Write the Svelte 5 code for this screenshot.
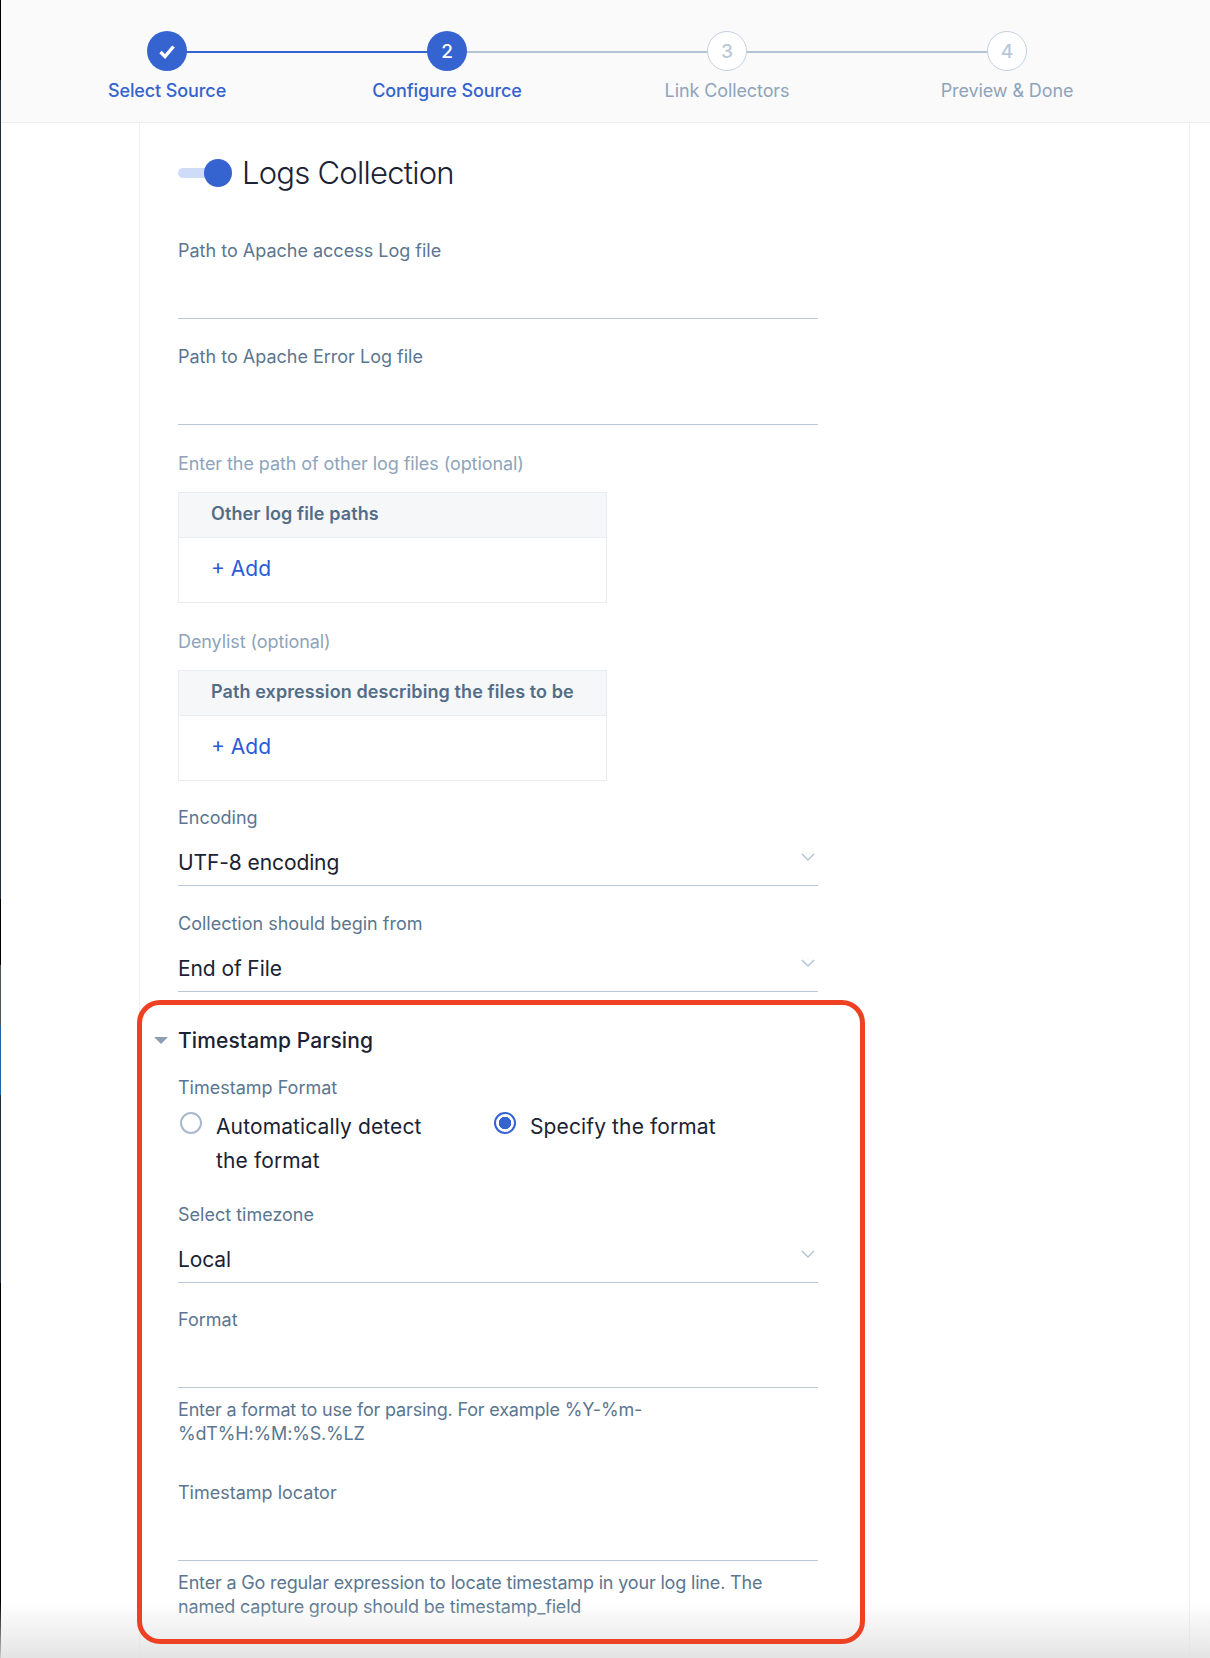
<script lang="ts">
	type Step = { label: string; mark: string; state: 'done' | 'current' | 'todo' };

	const steps: Step[] = [
		{ label: 'Select Source', mark: '', state: 'done' },
		{ label: 'Configure Source', mark: '2', state: 'current' },
		{ label: 'Link Collectors', mark: '3', state: 'todo' },
		{ label: 'Preview & Done', mark: '4', state: 'todo' }
	];
</script>

{#snippet chevron()}
	<svg class="chevron" width="14" height="8" viewBox="0 0 14 8" aria-hidden="true">
		<path d="M1 1l6 6 6-6" fill="none" stroke="#b3c2d3" stroke-width="1.4" />
	</svg>
{/snippet}

<div class="page">
	<header class="stepper">
		{#each steps as step, i}
			<div class="step {step.state}" class:last={i === steps.length - 1} class:lit={i === 0}>
				<span class="dot">
					{#if step.state === 'done'}
						<svg width="18" height="15" viewBox="0 0 18 15" aria-hidden="true">
							<path d="M2.5 8l4.5 4.5 8.5-10" fill="none" stroke="#fff" stroke-width="3.4" />
						</svg>
					{:else}
						{step.mark}
					{/if}
				</span>
				<span class="step-label">{step.label}</span>
			</div>
		{/each}
	</header>

	<main class="panel">
		<div class="form">
			<div class="logs-title">
				<span class="toggle"><span class="knob"></span></span>
				<h2>Logs Collection</h2>
			</div>

			<div class="field first">
				<span class="label">Path to Apache access Log file</span>
				<div class="input short"></div>
			</div>
			<div class="field second">
				<span class="label">Path to Apache Error Log file</span>
				<div class="input short"></div>
			</div>

			<div class="list-field">
				<span class="label muted">Enter the path of other log files (optional)</span>
				<div class="list-box">
					<div class="list-head">Other log file paths</div>
					<div class="list-body">+ Add</div>
				</div>
			</div>
			<div class="list-field">
				<span class="label muted">Denylist (optional)</span>
				<div class="list-box">
					<div class="list-head">Path expression describing the files to be</div>
					<div class="list-body">+ Add</div>
				</div>
			</div>

			<div class="field">
				<span class="label">Encoding</span>
				<div class="input select">UTF-8 encoding{@render chevron()}</div>
			</div>
			<div class="field second">
				<span class="label">Collection should begin from</span>
				<div class="input select">End of File{@render chevron()}</div>
			</div>

			<section class="parsing">
				<h3><span class="caret"></span>Timestamp Parsing</h3>
				<span class="label">Timestamp Format</span>
				<div class="radios">
					<div class="radio-item">
						<span class="radio"></span>
						<span>Automatically detect the format</span>
					</div>
					<div class="radio-item">
						<span class="radio on"></span>
						<span>Specify the format</span>
					</div>
				</div>

				<div class="field tz">
					<span class="label">Select timezone</span>
					<div class="input select">Local{@render chevron()}</div>
				</div>
				<div class="field">
					<span class="label">Format</span>
					<div class="input short"></div>
					<p class="help">Enter a format to use for parsing. For example %Y-%m-%dT%H:%M:%S.%LZ</p>
				</div>
				<div class="field locator">
					<span class="label">Timestamp locator</span>
					<div class="input short"></div>
					<p class="help">Enter a Go regular expression to locate timestamp in your log line. The named capture group should be timestamp_field</p>
				</div>
			</section>
		</div>
	</main>

	<!-- screenshot edges and the annotation sit on top of the page -->
	<div class="edge"></div>
	<div class="fade"></div>
	<div class="highlight"></div>
</div>

<style>
	:global(body) {
		margin: 0;
		background: #fff;
	}

	.page {
		position: relative;
		width: 1210px;
		height: 1658px;
		overflow: hidden;
		font-family: Inter, 'Liberation Sans', sans-serif;
		color: #1a2233;
	}

	/* ── Stepper ──────────────────────────────────────────── */
	.stepper {
		box-sizing: border-box;
		display: flex;
		height: 123px;
		padding: 31px 0 0 27px;
		background: #fafafa;
		border-bottom: 1px solid #eeeff1;
	}

	.step {
		position: relative;
		width: 280px;
		display: flex;
		flex-direction: column;
		align-items: center;
		gap: 8px;
	}

	.step::after {
		content: '';
		position: absolute;
		left: 50%;
		width: 280px;
		top: 20px;
		height: 2px;
		background: #b4c4d6;
	}

	.step.lit::after {
		background: #3563d0;
	}

	.step.last::after {
		display: none;
	}

	.dot {
		position: relative;
		z-index: 1;
		box-sizing: border-box;
		width: 40px;
		height: 40px;
		border-radius: 50%;
		display: flex;
		align-items: center;
		justify-content: center;
		font-size: 19px;
		font-weight: 500;
		background: #3563d0;
		color: #fff;
	}

	.todo .dot {
		background: #fff;
		border: 1px solid #c3d1e0;
		color: #b9c8d9;
	}

	.step-label {
		font-size: 18px;
		line-height: 24px;
		color: #3563d0;
		white-space: nowrap;
	}

	.done .step-label,
	.current .step-label {
		font-weight: 500;
		letter-spacing: -0.1px;
	}

	.todo .step-label {
		color: #8ea4bb;
		letter-spacing: -0.1px;
	}

	/* ── Panel ────────────────────────────────────────────── */
	.panel {
		box-sizing: border-box;
		margin-left: 139px;
		width: 1051px;
		height: 1535px;
		padding-left: 38px;
		border-left: 1px solid #eeeff1;
		border-right: 1px solid #eeeff1;
	}

	.form {
		width: 640px;
	}

	.logs-title {
		display: flex;
		align-items: center;
		gap: 10px;
		padding-top: 30px;
		height: 40px;
	}

	.logs-title h2 {
		margin: 0;
		font-size: 31px;
		line-height: 40px;
		font-weight: 300;
		letter-spacing: -0.75px;
		white-space: nowrap;
	}

	.toggle {
		position: relative;
		width: 54px;
		height: 10px;
		border-radius: 5px;
		background: #cfdcf8;
	}

	.knob {
		position: absolute;
		right: 0;
		top: -9px;
		width: 28px;
		height: 28px;
		border-radius: 50%;
		background: #3563d0;
	}

	/* ── Fields ───────────────────────────────────────────── */
	.label {
		display: block;
		font-size: 18px;
		line-height: 24px;
		color: #5b7690;
	}

	.label.muted {
		color: #8ea4bb;
		letter-spacing: -0.08px;
	}

	.field {
		margin-top: 25px;
	}

	.field.first {
		margin-top: 46px;
	}

	.field.second {
		margin-top: 26px;
	}

	.input {
		position: relative;
		box-sizing: border-box;
		height: 57px;
		border-bottom: 1px solid #b9c6d4;
	}

	.input.short {
		height: 56px;
	}

	.select {
		height: 56px;
		padding-top: 18px;
		font-size: 21px;
		line-height: 30px;
		letter-spacing: -0.1px;
	}

	.chevron {
		position: absolute;
		right: 3px;
		top: 23px;
	}

	.list-field {
		margin-top: 27px;
	}

	.list-box {
		box-sizing: border-box;
		width: 429px;
		height: 111px;
		margin-top: 16px;
		border: 1px solid #e9ecf0;
	}

	.list-head {
		box-sizing: border-box;
		height: 45px;
		padding: 7px 0 0 32px;
		font-size: 18px;
		line-height: 28px;
		font-weight: 600;
		letter-spacing: 0.1px;
		color: #536d87;
		background: #f5f7f9;
		border-bottom: 1px solid #e9ecf0;
		white-space: nowrap;
		overflow: hidden;
	}

	.list-body {
		padding: 16px 0 0 32px;
		font-size: 21px;
		line-height: 30px;
		color: #2b5bd7;
	}

	/* ── Timestamp parsing ────────────────────────────────── */
	.parsing {
		margin-top: 34px;
	}

	.parsing h3 {
		position: relative;
		margin: 0 0 20px;
		font-size: 21px;
		line-height: 30px;
		font-weight: 500;
		letter-spacing: 0.1px;
	}

	.caret {
		position: absolute;
		left: -24px;
		top: 11px;
		border-left: 7px solid transparent;
		border-right: 7px solid transparent;
		border-top: 7px solid #8d9db4;
	}

	.radios {
		display: flex;
		margin-top: 10px;
		font-size: 21px;
		line-height: 34px;
		letter-spacing: 0.12px;
	}

	.radio-item {
		display: flex;
		width: 314px;
		padding-right: 60px;
		box-sizing: border-box;
		gap: 14px;
		padding-left: 2px;
	}

	.radio {
		flex: none;
		box-sizing: border-box;
		width: 22px;
		height: 22px;
		margin-top: 2px;
		border-radius: 50%;
		border: 2px solid #a9b9cc;
		background: #fff;
	}

	.radio.on {
		border-color: #3563d0;
		background: radial-gradient(circle, #3563d0 0 6px, #fff 6.5px);
	}

	.field.tz {
		margin-top: 25px;
	}

	.help {
		margin: 10px 0 0;
		font-size: 18px;
		line-height: 24px;
		letter-spacing: -0.17px;
		color: #5b7690;
	}

	.field.locator {
		margin-top: 35px;
	}

	/* ── Overlays ─────────────────────────────────────────── */
	.highlight {
		position: absolute;
		left: 137px;
		top: 1000px;
		width: 728px;
		height: 644px;
		box-sizing: border-box;
		border: 5px solid #ee4123;
		border-radius: 23px;
	}

	.edge {
		position: absolute;
		left: 0;
		top: 0;
		width: 1px;
		height: 100%;
		background: linear-gradient(
			#000 80px,
			#1f2d3d 80px 899px,
			#000 899px 965px,
			#4c5661 965px 1026px,
			#1f66a8 1026px 1095px,
			#1f2d3d 1095px 1283px,
			#000 1283px
		);
	}

	.fade {
		position: absolute;
		left: 0;
		right: 0;
		bottom: 0;
		height: 56px;
		background: linear-gradient(rgba(225, 225, 225, 0), rgba(225, 225, 225, 0.9));
		pointer-events: none;
	}
</style>
